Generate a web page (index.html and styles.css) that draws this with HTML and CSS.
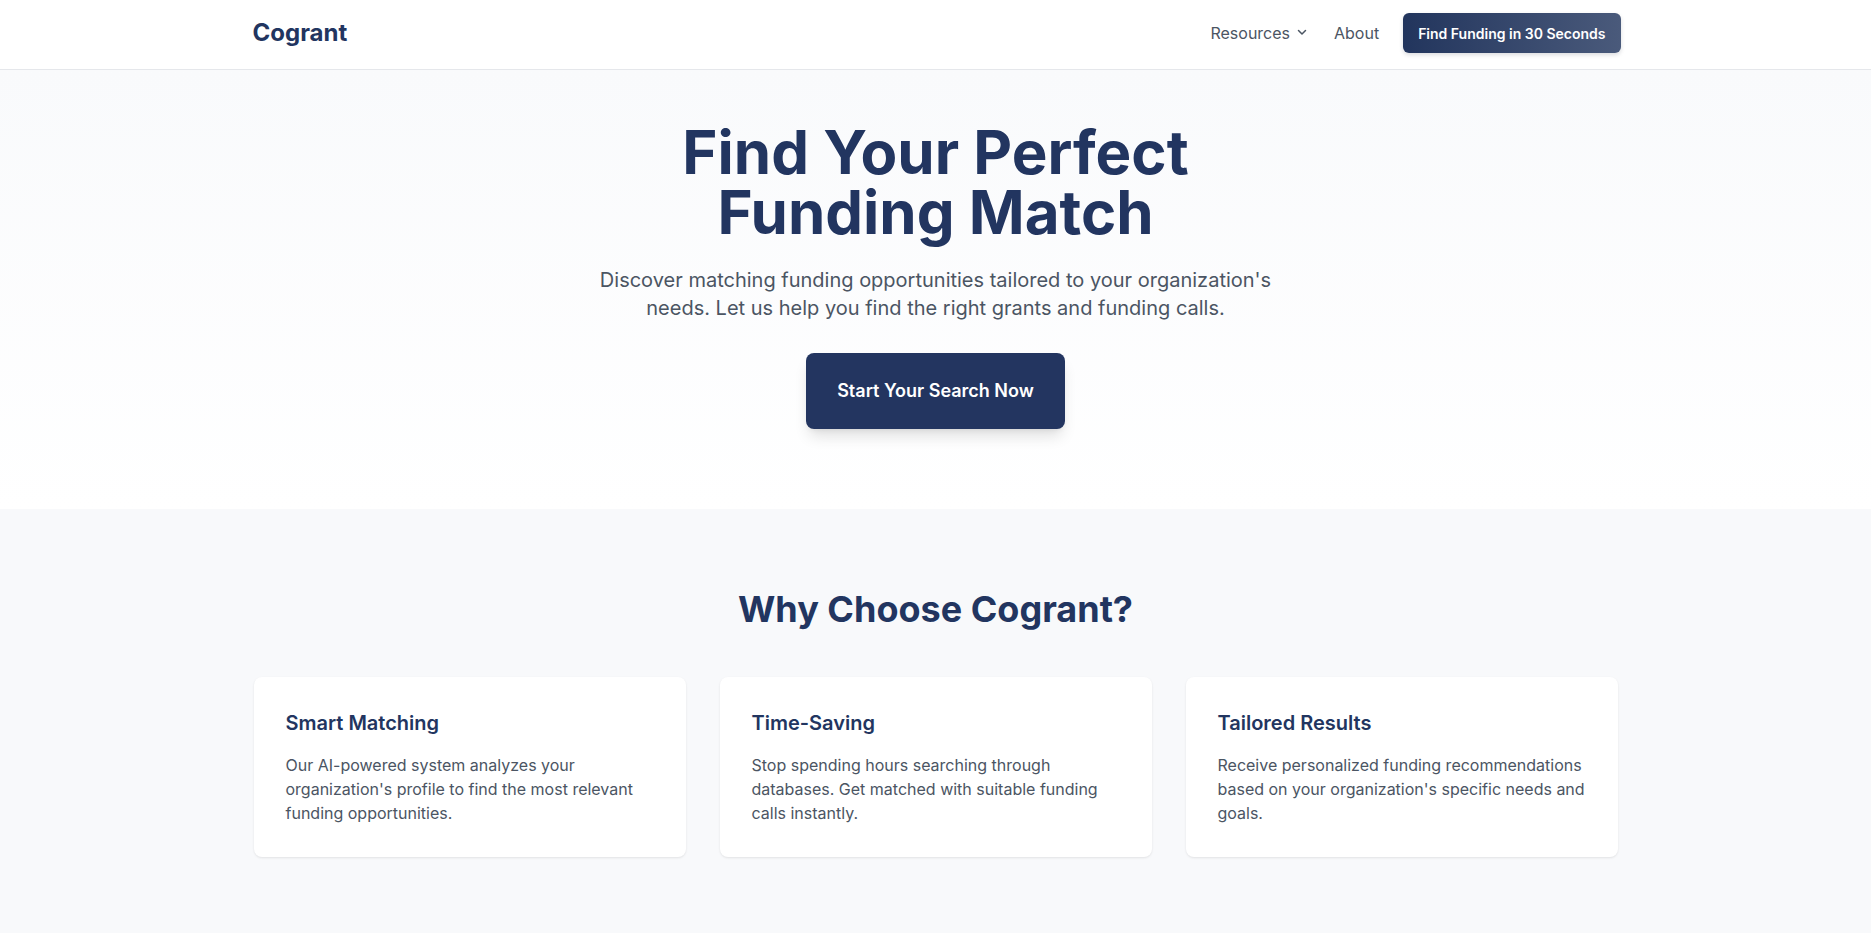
FILE: index.html
```html
<!DOCTYPE html>
<html lang="en">
<head>
<meta charset="utf-8">
<title>Cogrant</title>
<link rel="stylesheet" href="styles.css">
</head>
<body>
<header class="site-header">
  <div class="container header-row">
    <a class="logo" href="#">Cogrant</a>
    <nav class="nav">
      <a class="nav-link" href="#">Resources
        <svg class="chev" viewBox="0 0 16 16" width="16" height="16" fill="none" stroke="currentColor" stroke-width="1.5" stroke-linecap="round" stroke-linejoin="round"><path d="M4.5 6.5 8 10l3.5-3.5"/></svg>
      </a>
      <a class="nav-link" href="#">About</a>
      <a class="nav-cta" href="#">Find Funding in 30 Seconds</a>
    </nav>
  </div>
</header>
<main>
  <section class="hero">
    <h1 class="hero-title">Find Your Perfect<br>Funding Match</h1>
    <p class="hero-sub">Discover matching funding opportunities tailored to your organization's needs. Let us help you find the right grants and funding calls.</p>
    <a class="hero-btn" href="#">Start Your Search Now</a>
  </section>
  <section class="features">
    <div class="container">
      <h2 class="features-title">Why Choose Cogrant?</h2>
      <div class="cards">
        <div class="card">
          <h3 class="card-title">Smart Matching</h3>
          <p class="card-text">Our AI-powered system analyzes your organization's profile to find the most relevant funding opportunities.</p>
        </div>
        <div class="card">
          <h3 class="card-title">Time-Saving</h3>
          <p class="card-text">Stop spending hours searching through databases. Get matched with suitable funding calls instantly.</p>
        </div>
        <div class="card">
          <h3 class="card-title">Tailored Results</h3>
          <p class="card-text">Receive personalized funding recommendations based on your organization's specific needs and goals.</p>
        </div>
      </div>
    </div>
  </section>
</main>
</body>
</html>
```
FILE: styles.css
```css
* { box-sizing: border-box; }
html, body { margin: 0; padding: 0; }
body {
  font-family: Inter, "Noto Sans", sans-serif;
  color: #223560;
  background: #f8f9fb;
}
a { text-decoration: none; color: inherit; }
h1, h2, h3, p { margin: 0; }

.container {
  max-width: 1400px;
  margin: 0 auto;
  padding: 0 16px;
}

.site-header {
  background: #ffffff;
  border-bottom: 1px solid #e5e7eb;
  padding: 13px 0 16px;
}
.header-row {
  display: flex;
  align-items: center;
  justify-content: space-between;
  height: 40px;
  padding-left: 17px;
  padding-right: 15px;
}
.logo {
  font-size: 24px;
  line-height: 32px;
  font-weight: 700;
  color: #223560;
}
.nav {
  display: flex;
  align-items: center;
  gap: 24px;
}
.nav-link {
  display: flex;
  align-items: center;
  font-size: 16px;
  line-height: 24px;
  color: #4b5563;
}
.chev { margin-left: 4px; margin-top: -2px; }
.nav-cta {
  display: flex;
  align-items: center;
  height: 40px;
  padding: 0 15px;
  border-radius: 6px;
  font-size: 14px;
  font-weight: 600;
  color: #ffffff;
  background: linear-gradient(90deg, #22355d 0%, #4a5a7b 100%);
  box-shadow: 0 2px 4px rgba(15, 23, 42, 0.15);
}

.hero {
  background: linear-gradient(180deg, #f9fafc 0%, #ffffff 100%);
  display: flex;
  flex-direction: column;
  align-items: center;
  text-align: center;
  padding: 52px 16px 80px;
}
.hero-title {
  font-size: 60px;
  line-height: 60px;
  font-weight: 700;
  color: #223560;
  margin-bottom: 24px;
}
.hero-sub {
  max-width: 672px;
  font-size: 20px;
  line-height: 28px;
  color: #4b5563;
  margin-bottom: 31px;
}
.hero-btn {
  display: inline-block;
  padding: 24px 31px;
  border-radius: 8px;
  background: #233560;
  color: #ffffff;
  font-size: 18px;
  line-height: 28px;
  font-weight: 600;
  box-shadow: 0 10px 15px -3px rgba(0, 0, 0, 0.12), 0 4px 6px -4px rgba(0, 0, 0, 0.1);
}

.features {
  background: #f8f9fb;
  padding: 80px 0 80px;
}
.features-title {
  text-align: center;
  font-size: 36px;
  line-height: 40px;
  font-weight: 700;
  color: #223560;
  margin-bottom: 48px;
}
.cards {
  display: grid;
  grid-template-columns: repeat(3, 1fr);
  gap: 34px;
  padding: 0 2px;
}
.card {
  background: #ffffff;
  border-radius: 8px;
  padding: 32px;
  box-shadow: 0 1px 3px rgba(0, 0, 0, 0.06), 0 1px 2px rgba(0, 0, 0, 0.04);
}
.card-title {
  font-size: 20px;
  line-height: 28px;
  font-weight: 600;
  color: #223560;
  margin-bottom: 16px;
}
.card-text {
  font-size: 16px;
  line-height: 24px;
  color: #4b5563;
}
```
